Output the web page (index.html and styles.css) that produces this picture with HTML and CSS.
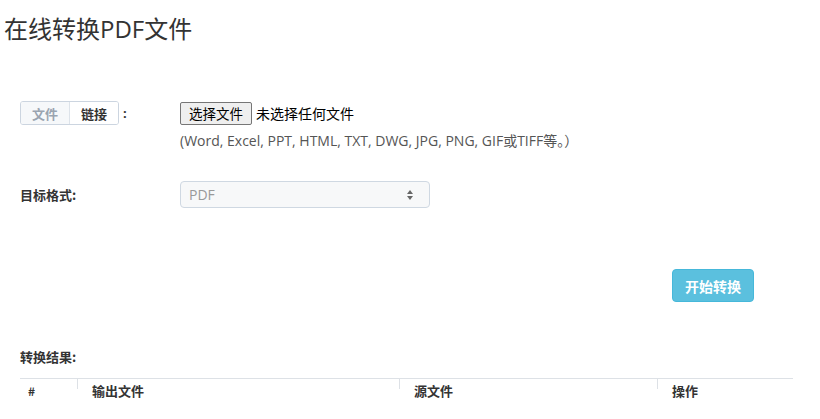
FILE: index.html
```html
<!DOCTYPE html>
<html lang="zh-CN">
<head>
<meta charset="utf-8">
<title>在线转换PDF文件</title>
<link rel="stylesheet" href="styles.css">
</head>
<body>
<div class="page">
  <h1 class="title">在线转换PDF文件</h1>

  <div class="form">
    <div class="row row-file">
      <div class="label-col">
        <div class="seg">
          <span class="seg-btn active">文件</span>
          <span class="seg-btn">链接</span>
        </div>
        <span class="colon">:</span>
      </div>
      <div class="field-col">
        <div class="file-line">
          <span class="file-btn">选择文件</span>
          <span class="file-name">未选择任何文件</span>
        </div>
        <div class="hint">(Word, Excel, PPT, HTML, TXT, DWG, JPG, PNG, GIF或TIFF等。）</div>
      </div>
    </div>

    <div class="row row-format">
      <div class="label-col"><span class="label">目标格式:</span></div>
      <div class="field-col">
        <div class="select">
          <span class="select-val">PDF</span>
          <svg class="select-arrow" width="8" height="12" viewBox="0 0 8 12"><path d="M4 1 L7 5 L1 5 Z M1 7 L7 7 L4 11 Z" fill="#666"/></svg>
        </div>
      </div>
    </div>

    <div class="actions">
      <span class="btn-go">开始转换</span>
    </div>
  </div>

  <div class="result">
    <div class="result-label">转换结果:</div>
    <div class="table">
      <div class="th c1">#</div>
      <div class="th c2 sep">输出文件</div>
      <div class="th c3 sep">源文件</div>
      <div class="th c4 sep">操作</div>
    </div>
  </div>
</div>
</body>
</html>
```

FILE: styles.css
```css
* { box-sizing: border-box; }
html, body { margin: 0; padding: 0; background: #fff; }
body {
  font-family: "Open Sans", "Noto Sans CJK SC", sans-serif;
  color: #333;
  font-size: 14px;
}
.page { padding: 12px 0 0 0; }
.title {
  margin: 0 0 0 4px;
  font-size: 24px;
  line-height: 34px;
  font-weight: 400;
  color: #333;
}
.form { padding: 55px 0 0 20px; }
.row { display: flex; align-items: flex-start; }
.label-col { width: 160px; display: flex; align-items: center; height: 24px; }
.field-col { display: flex; flex-direction: column; }

.seg {
  display: flex;
  border: 1px solid #ccd5e0;
  border-radius: 3px;
  height: 24px;
  width: 99px;
  overflow: hidden;
}
.seg-btn {
  flex: 1;
  display: flex;
  align-items: center;
  justify-content: center;
  font-size: 13px;
  font-weight: 700;
  font-family: "Noto Sans CJK SC", sans-serif;
  color: #333;
  background: #fff;
}
.seg-btn.active {
  color: #9aa4b0;
  background: #f6f8fa;
  border-right: 1px solid #dde3ea;
}
.colon { margin-left: 4px; font-weight: 700; font-size: 13px; }

.file-line { display: flex; align-items: center; height: 24px; }
.file-btn {
  display: inline-flex;
  align-items: center;
  justify-content: center;
  height: 23px;
  width: 72px;
  border: 1px solid #767676;
  border-radius: 2px;
  background: #efefef;
  font-size: 13.5px;
  font-family: "Noto Sans CJK SC", sans-serif;
  color: #000;
}
.file-name {
  margin-left: 4px;
  font-size: 14px;
  font-family: "Noto Sans CJK SC", sans-serif;
  color: #000;
}
.hint {
  margin-top: 6px;
  line-height: 20px;
  font-size: 14px;
  color: #555;
}

.row-format { margin-top: 30px; }
.row-format .label-col { height: 26px; }
.label {
  font-size: 13px;
  font-weight: 700;
  font-family: "Noto Sans CJK SC", sans-serif;
  color: #333;
}
.select {
  width: 250px;
  height: 27px;
  border: 1px solid #cfd8e2;
  border-radius: 4px;
  background: #f7f8f9;
  display: flex;
  align-items: center;
  justify-content: space-between;
  padding: 0 15px 0 8px;
}
.select-val { color: #999; font-size: 14px; }

.actions {
  display: flex;
  justify-content: flex-end;
  padding-right: 66px;
  margin-top: 61px;
}
.btn-go {
  display: inline-flex;
  align-items: center;
  justify-content: center;
  width: 82px;
  height: 33px;
  background: #5bc0de;
  border: 1px solid #46b8da;
  border-radius: 4px;
  color: #fff;
  font-size: 14px;
  font-weight: 700;
  font-family: "Noto Sans CJK SC", sans-serif;
}

.result { padding: 45px 27px 0 20px; }
.result-label {
  font-size: 13px;
  font-weight: 700;
  line-height: 20px;
  font-family: "Noto Sans CJK SC", sans-serif;
}
.table {
  margin-top: 11px;
  border-top: 1px solid #dde1e6;
  display: grid;
  grid-template-columns: 57px 322px 258px 1fr;
}
.th {
  font-size: 13px;
  font-weight: 700;
  font-family: "Noto Sans CJK SC", sans-serif;
  color: #333;
  padding: 2px 15px 8px 15px;
  line-height: 20px;
}
.c1 { padding-left: 8px; font-size: 12px; }
.sep {
  background: linear-gradient(#dde1e6, #dde1e6) left top / 1px 10px no-repeat;
}
```
